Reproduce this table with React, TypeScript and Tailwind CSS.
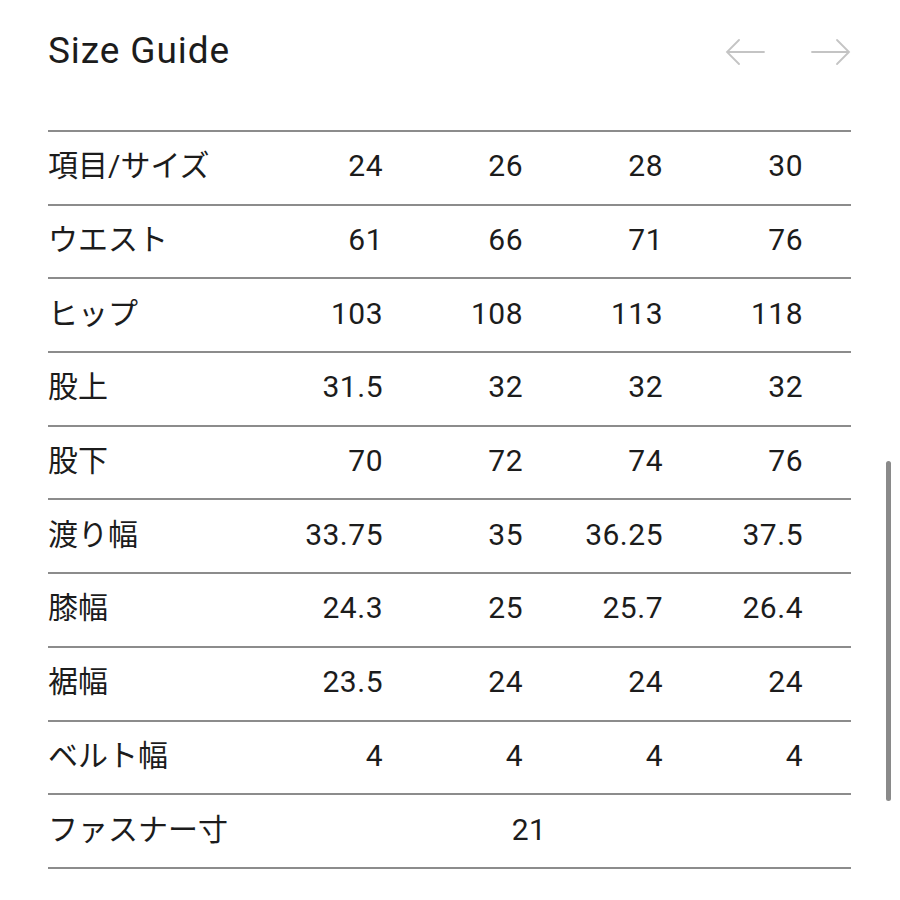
import React from 'react';

const sizes = ['24', '26', '28', '30'];

const rows: { label: string; values: string[] }[] = [
  { label: 'ウエスト', values: ['61', '66', '71', '76'] },
  { label: 'ヒップ', values: ['103', '108', '113', '118'] },
  { label: '股上', values: ['31.5', '32', '32', '32'] },
  { label: '股下', values: ['70', '72', '74', '76'] },
  { label: '渡り幅', values: ['33.75', '35', '36.25', '37.5'] },
  { label: '膝幅', values: ['24.3', '25', '25.7', '26.4'] },
  { label: '裾幅', values: ['23.5', '24', '24', '24'] },
  { label: 'ベルト幅', values: ['4', '4', '4', '4'] },
];

const font = "font-['Roboto','Noto_Sans_CJK_JP',sans-serif]";

function Arrow({ dir }: { dir: 'left' | 'right' }) {
  return (
    <svg width="40" height="28" viewBox="0 0 40 28" fill="none" stroke="#c4c4c4" strokeWidth="1.8" strokeLinecap="round">
      {dir === 'left' ? (
        <path d="M39 14H2M14 2L2 14l12 12" />
      ) : (
        <path d="M1 14h37M26 2l12 12-12 12" />
      )}
    </svg>
  );
}

function Row({ label, children }: { label: string; children: React.ReactNode }) {
  return (
    <div className="grid grid-cols-[195px_140px_140px_140px_140px] h-[73.7px] items-center border-b-2 border-[#8c8c8c] pb-[3px]">
      <div className="text-[30px] text-[#1c1c1c] leading-none">{label}</div>
      {children}
    </div>
  );
}

export default function App() {
  return (
    <div className={`relative w-[900px] h-[900px] bg-white overflow-hidden ${font}`}>
      <div className="pl-[48px] pr-[49px]">
        <div className="flex items-center justify-between pt-[32px]">
          <h1 className="text-[37px] leading-[37px] text-[#1c1c1c] font-normal tracking-[0.9px]">Size Guide</h1>
          <div className="flex items-center gap-[46px] mt-[2px]">
            <Arrow dir="left" />
            <Arrow dir="right" />
          </div>
        </div>

        <div className="mt-[61px] border-t-2 border-[#8c8c8c]">
          <Row label="項目/サイズ">
            {sizes.map((s) => (
              <div key={s} className="text-right text-[30px] leading-none text-[#1c1c1c] tracking-[0.5px]">
                {s}
              </div>
            ))}
          </Row>
          {rows.map((r) => (
            <Row key={r.label} label={r.label}>
              {r.values.map((v, i) => (
                <div key={i} className="text-right text-[30px] leading-none text-[#1c1c1c] tracking-[0.5px]">
                  {v}
                </div>
              ))}
            </Row>
          ))}
          <Row label="ファスナー寸">
            <div className="col-span-4 text-center pl-[12px] text-[30px] leading-none text-[#1c1c1c] tracking-[0.5px]">
              21
            </div>
          </Row>
        </div>
      </div>

      <div className="absolute left-[886px] top-[461px] w-[5px] h-[340px] rounded-full bg-[#8a8a8a]" />
    </div>
  );
}
